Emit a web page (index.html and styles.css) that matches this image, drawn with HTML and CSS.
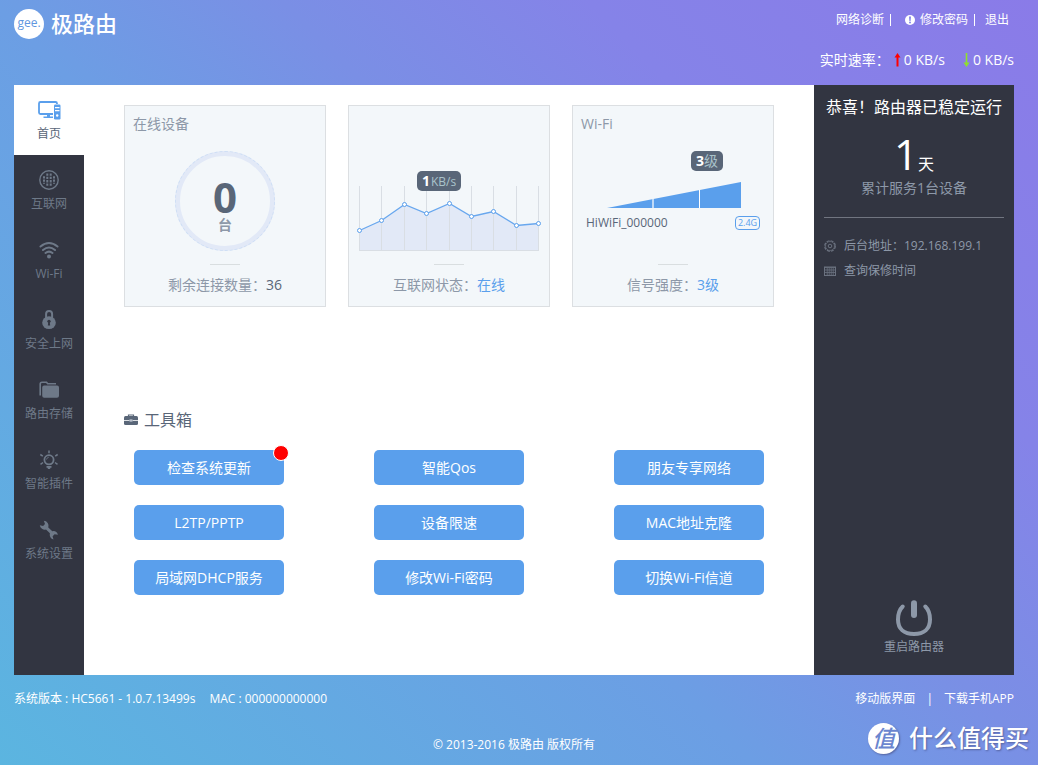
FILE: index.html
```html
<!DOCTYPE html>
<html lang="zh-CN">
<head>
<meta charset="utf-8">
<title>极路由</title>
<meta name="viewport" content="width=device-width, initial-scale=1">
<link rel="stylesheet" href="styles.css">
</head>
<body>
<div class="page">
  <header class="header">
    <a class="logo" href="#">
      <span class="logo-mark">gee.</span>
      <span class="logo-name">极路由</span>
    </a>
    <div class="header-side">
      <div class="header-links">
        <a href="#">网络诊断</a><i class="bar"></i>
        <a class="with-icon" href="#">
          <svg width="10" height="10" viewBox="0 0 10 10"><circle cx="5" cy="5" r="5" fill="#fff"/><path d="M4 1.6h2L5.6 6H4.4z" fill="#8583e8"/><circle cx="5" cy="7.6" r="1" fill="#8583e8"/></svg>
          修改密码</a><i class="bar"></i>
        <a href="#">退出</a>
      </div>
      <div class="rates">
        <span>实时速率：</span>
        <span class="rate"><svg width="7" height="14" viewBox="0 0 7 14"><path d="M3.500 0L6.500 4.500H4.500V13.500H2.500V4.500H.5z" fill="#f00"/></svg>0 KB/s</span>
        <span class="rate"><svg width="7" height="14" viewBox="0 0 7 14"><path d="M3.500 14L6.500 9.500H4.300V0H2.700V9.500H.5z" fill="#8fe02e"/></svg>0 KB/s</span>
      </div>
    </div>
  </header>

  <div class="panel">
    <nav class="nav">
      <a class="nav-item active" href="#">
        <svg width="24" height="20" viewBox="0 0 24 20"><rect x="2" y="2" width="18" height="12" rx="1.500" fill="none" stroke="#5a9fec" stroke-width="1.800"/><path d="M10 14h3v2.500h3.500V18h-10v-1.500H10z" fill="#5a9fec"/><rect x="16" y="4" width="8" height="15.500" rx="1.500" fill="#fff"/><rect x="17" y="4.500" width="6.500" height="15" rx="1.200" fill="#5a9fec"/><path d="M18 7h4.500v1.200H18zM18 10h4.500v1.200H18z" fill="#fff"/><circle cx="20.200" cy="15.500" r="1.200" fill="#fff"/></svg>
        <span>首页</span>
      </a>
      <a class="nav-item" href="#">
        <svg width="20" height="20" viewBox="0 0 20 20"><circle cx="10" cy="10" r="9.200" fill="none" stroke="#6e7988" stroke-width="1.400"/><path d="M5 6.200v7.600M8.300 3.500v13M11.700 3.500v13M15 6.200v7.600" stroke="#6e7988" stroke-width="2" stroke-dasharray="2.300 1"/></svg>
        <span>互联网</span>
      </a>
      <a class="nav-item" href="#">
        <svg width="20" height="20" viewBox="0 0 20 20"><g fill="none" stroke="#6e7988" stroke-width="2" stroke-linecap="round"><path d="M1.500 6.500Q10-.5 18.500 6.500M4 10Q10 5 16 10M6.500 13Q10 10.300 13.500 13"/></g><circle cx="10" cy="16.500" r="2" fill="#6e7988"/></svg>
        <span>Wi-Fi</span>
      </a>
      <a class="nav-item" href="#">
        <svg width="20" height="22" viewBox="0 0 20 22"><path d="M6.800 9V4.500a3.300 3.300 0 0 1 6.600 0V9" fill="none" stroke="#6e7988" stroke-width="2.200"/><ellipse cx="10" cy="14" rx="7.500" ry="7" fill="#6e7988"/><circle cx="10" cy="12.500" r="1.800" fill="#323541"/><path d="M9.200 13h1.600l.5 4H8.700z" fill="#323541"/></svg>
        <span>安全上网</span>
      </a>
      <a class="nav-item" href="#">
        <svg width="20" height="20" viewBox="0 0 20 20"><path d="M1.200 15.500V4q0-1.800 1.800-1.800h4.500l1.200 1.500H17" fill="none" stroke="#6e7988" stroke-width="1.600"/><path d="M3.200 7.500q0-2 2-2H18q2 0 2 2v8.300q0 2-2 2H5.200q-2 0-2-2z" fill="#6e7988"/></svg>
        <span>路由存储</span>
      </a>
      <a class="nav-item" href="#">
        <svg width="20" height="20" viewBox="0 0 20 20"><circle cx="10" cy="9.800" r="4.600" fill="none" stroke="#6e7988" stroke-width="1.800"/><path d="M7.500 9.500Q7.800 7.500 9.800 7.200" fill="none" stroke="#6e7988" stroke-width=".8"/><path d="M7.500 16h5v1.700h-1L11 19H9l-.5-1.300h-1z" fill="#6e7988"/><path d="M10 .5v2.700M1.300 4.500l2.500 1.600M18.700 4.500l-2.500 1.600M1.500 14.300l2.500-1.800M18.500 14.300L16 12.500" stroke="#6e7988" stroke-width="1.500"/></svg>
        <span>智能插件</span>
      </a>
      <a class="nav-item" href="#">
        <svg width="20" height="20" viewBox="0 0 20 20"><path d="M4.800.800A5 5 0 0 1 9.300 7.400l4 3.800a5 5 0 0 1 5.600 3.500l-3.300-.4-2 2 .9 3.200a5 5 0 0 1-3.600-6.200L7 9.500A5 5 0 0 1 .8 5.300l3.300.600 1.900-1.800z" fill="#6e7988"/></svg>
        <span>系统设置</span>
      </a>
    </nav>

    <main class="content">
      <section class="cards">
        <article class="card">
          <h2 class="card-title">在线设备</h2>
          <div class="ring"><strong>0</strong><span>台</span></div>
          <p class="card-status">剩余连接数量：<b>36</b></p>
        </article>
        <article class="card">
          <div class="visual">
            <svg width="200" height="118" viewBox="0 0 200 118">
              <path d="M10.500 96.500L32.500 86.500L55.500 70.500L77.500 79.500L100.500 69.500L122.500 82.500L144.500 77.500L167.500 91.500L189.500 89.500V116.500H10.500z" fill="#e2e9f7"/>
              <path d="M10.500 52V116.500M32.500 52V116.500M55.500 52V116.500M77.500 52V116.500M100.500 52V116.500M122.500 52V116.500M144.500 52V116.500M167.500 52V116.500M189.500 52V116.500M10 116.500H190" stroke="#d9dee4" fill="none"/>
              <path d="M10.500 96.500L32.500 86.500L55.500 70.500L77.500 79.500L100.500 69.500L122.500 82.500L144.500 77.500L167.500 91.500L189.500 89.500" fill="none" stroke="#68a7ee" stroke-width="1.300"/>
              <g fill="#fff" stroke="#5a9fec"><circle cx="10.500" cy="96.500" r="2"/><circle cx="32.500" cy="86.500" r="2"/><circle cx="55.500" cy="70.500" r="2"/><circle cx="77.500" cy="79.500" r="2"/><circle cx="100.500" cy="69.500" r="2"/><circle cx="122.500" cy="82.500" r="2"/><circle cx="144.500" cy="77.500" r="2"/><circle cx="167.500" cy="91.500" r="2"/><circle cx="189.500" cy="89.500" r="2"/></g>
            </svg>
            <div class="tip tip-speed"><b>1</b>KB/s</div>
          </div>
          <p class="card-status">互联网状态：<a href="#">在线</a></p>
        </article>
        <article class="card">
          <h2 class="card-title">Wi-Fi</h2>
          <div class="visual visual-wifi">
            <svg width="200" height="74" viewBox="0 0 200 74"><path d="M34 74L168 48V74z" fill="#5a9fec"/><path d="M80 65V74" stroke="#c0daf7" stroke-width="2"/><path d="M126.500 56V74" stroke="#fff"/></svg>
            <div class="tip tip-level"><b>3</b>级</div>
            <div class="ssid"><span>HiWiFi_000000</span><span class="band">2.4G</span></div>
          </div>
          <p class="card-status">信号强度：<a href="#">3级</a></p>
        </article>
      </section>

      <section class="tools">
        <h2 class="tools-title">
          <svg width="14" height="12" viewBox="0 0 14 12"><path d="M4.500 2.500V1h5v1.500" fill="none" stroke="#596678" stroke-width="1.200"/><rect y="2" width="14" height="9" rx="1.500" fill="#596678"/><path d="M0 6.500h5M9 6.500h5" stroke="#fff" stroke-width=".8"/><ellipse cx="7" cy="6.500" rx="2" ry="1.200" fill="#b8c0cb"/></svg>
          工具箱</h2>
        <div class="tool-grid">
          <button class="tool has-dot" type="button">检查系统更新</button>
          <button class="tool" type="button">智能Qos</button>
          <button class="tool" type="button">朋友专享网络</button>
          <button class="tool" type="button">L2TP/PPTP</button>
          <button class="tool" type="button">设备限速</button>
          <button class="tool" type="button">MAC地址克隆</button>
          <button class="tool" type="button">局域网DHCP服务</button>
          <button class="tool" type="button">修改Wi-Fi密码</button>
          <button class="tool" type="button">切换Wi-Fi信道</button>
        </div>
      </section>
    </main>

    <aside class="aside">
      <h2 class="aside-title">恭喜！路由器已稳定运行</h2>
      <p class="days"><strong>1</strong><span>天</span></p>
      <p class="served">累计服务1台设备</p>
      <ul class="info">
        <li><svg width="12" height="12" viewBox="0 0 12 12"><circle cx="6" cy="6" r="5.300" fill="none" stroke="#6b7280" stroke-width="1.200" stroke-dasharray="3 1.160"/><circle cx="6" cy="6" r="4.500" fill="none" stroke="#6b7280" stroke-width=".7"/><circle cx="6" cy="6" r="1.800" fill="none" stroke="#6b7280"/></svg>后台地址：192.168.199.1</li>
        <li><svg width="12" height="12" viewBox="0 0 12 12"><rect x=".5" y="2" width="11" height="8.500" fill="none" stroke="#6b7280"/><path d="M0 2.500h12M1 5h10M1 7.500h10M3.200 3v7M5.200 3v7M7.200 3v7M9.200 3v7" stroke="#6b7280" stroke-width=".8"/></svg><a href="#">查询保修时间</a></li>
      </ul>
      <button class="restart" type="button">
        <svg width="36" height="37" viewBox="0 0 36 37"><g fill="none" stroke="#8d98a8" stroke-linecap="round"><path d="M6.700 6.500C2 11 2 16 2 19.500C2 29 8 34 18 34S34 29 34 19.500C34 16 34 11 29.300 6.500" stroke-width="4"/><path d="M18 3.200V15" stroke-width="6"/></g></svg>
        重启路由器
      </button>
    </aside>
  </div>

  <footer class="footer">
    <div class="footer-row">
      <div class="version"><span>系统版本 : HC5661 - 1.0.7.13499s</span><span>MAC : 000000000000</span></div>
      <div class="apps"><a href="#">移动版界面</a><span>|</span><a href="#">下载手机APP</a></div>
    </div>
    <p class="copyright">© 2013-2016 极路由 版权所有</p>
  </footer>
</div>
<div class="watermark"><span class="watermark-mark"><i>值</i></span>什么值得买</div>
</body>
</html>
```
FILE: styles.css
```css
* { box-sizing: border-box; }

html { min-height: 100%; }

body {
  margin: 0;
  min-height: 100vh;
  position: relative;
  background: linear-gradient(45deg, #5bb5e0 0%, #6c9ee4 42%, #7a8fe5 58%, #8583e8 75%, #8a7be8 100%);
  color: #fff;
  font: 12px/20px "Open Sans", "Noto Sans CJK SC", sans-serif;
}

h2, p, ul { margin: 0; padding: 0; font-weight: 400; }
ul { list-style: none; }
a { color: inherit; text-decoration: none; }
button { font: inherit; color: inherit; border: 0; padding: 0; background: none; cursor: pointer; }
svg { display: block; flex: none; }

.page { padding: 0 24px 0 14px; }

.header { display: flex; justify-content: space-between; height: 85px; }
.logo { display: flex; align-items: center; gap: 7px; height: 48px; }
.logo-mark {
  width: 30px; height: 30px; border-radius: 50%;
  background: #fff; color: #5f97e0;
  font: 12px/28px "Open Sans", sans-serif; text-align: center;
}
.logo-name { font-size: 22px; font-weight: 500; line-height: 26px; padding-bottom: 2px; }

.header-side { padding-top: 10px; }
.header-links { display: flex; justify-content: flex-end; align-items: center; padding-right: 5px; }
.with-icon { display: flex; align-items: center; gap: 5px; }
.bar { width: 1px; height: 12px; background: #fff; margin: 0 10px 0 6px; }
.header-links .bar:first-of-type { margin-right: 14px; }
.rates { display: flex; justify-content: flex-end; margin-top: 20px; font-size: 14px; }
.rate { display: flex; align-items: center; gap: 3px; }
.rates span:first-child { margin-right: 4px; }
.rate + .rate { margin-left: 18px; }

.panel { display: flex; min-height: 590px; background: #fff; }

.nav { flex: 0 0 70px; background: #323541; color: #6e7988; }
.nav-item {
  display: flex; flex-direction: column; align-items: center; justify-content: center;
  height: 70px; gap: 4px; padding-top: 3px;
}
.nav-item svg { height: 20px; }
.nav-item.active { background: #fff; color: #596678; }

.content { flex: 1; padding: 20px 40px; }
.cards { display: grid; grid-template-columns: repeat(3, 1fr); gap: 22px; }
.card {
  display: flex; flex-direction: column;
  min-height: 202px; padding-top: 8px;
  background: #f3f7fa; border: 1px solid #dcdfe2; color: #8d98a8;
}
.card-title { padding: 0 8px; font-size: 14px; line-height: 20px; }
.ring {
  display: flex; flex-direction: column; align-items: center; justify-content: center;
  width: 100px; height: 100px; margin: auto auto 0; padding-top: 10px;
  border-radius: 50%; background: #f3f7fa;
  border: 5px solid #e2e9f7; outline: 1px dashed #cfdff5; outline-offset: -1px;
}
.ring strong { font-size: 42px; line-height: 38px; color: #596678; }
.ring span { font-size: 14px; font-weight: 700; line-height: 18px; }
.visual { position: relative; width: 200px; height: 117px; margin: auto auto 0; }
.tip {
  position: absolute; height: 20px; border-radius: 5px;
  background: #596678; color: #a9c3cb; line-height: 20px; text-align: center;
}
.tip b { color: #fff; font-size: 14px; }
.tip-speed { left: 68px; top: 37px; width: 44px; }
.tip-speed b { margin-right: 1px; }
.tip-level { left: 118px; top: 17px; width: 32px; font-size: 14px; }
.ssid { display: flex; justify-content: space-between; align-items: center; padding: 5px 13px 0; color: #596678; }
.band {
  width: 25px; height: 14px; border: 1px solid #5a9fec; border-radius: 4px;
  color: #5a9fec; font-size: 9px; line-height: 12px; text-align: center;
}
.card-status { padding: 11px 0; font-size: 14px; line-height: 20px; text-align: center; }
.card-status::before { content: ""; display: block; width: 30px; height: 1px; margin: 2px auto 10px; background: #d9dee0; }
.card-status b { font-weight: 400; color: #596678; }
.card-status a { color: #5a9fec; }

.tools { margin-top: 101px; }
.tools-title { display: flex; align-items: center; gap: 6px; color: #596678; font-size: 16px; line-height: 24px; }
.tool-grid { display: grid; grid-template-columns: repeat(3, 150px); justify-content: space-between; gap: 20px 0; padding: 18px 10px 0; }
.tool { position: relative; height: 35px; border-radius: 5px; background: #5a9fec; font-size: 14px; }
.has-dot::after {
  content: ""; position: absolute; right: -5px; top: -5px;
  width: 14px; height: 14px; border: 1px solid #fff; border-radius: 50%; background: #f00;
}

.aside {
  display: flex; flex-direction: column; flex: 0 0 200px;
  padding: 10px 10px 18px; background: #323541; color: #8d98a8; text-align: center;
}
.aside-title { color: #fff; font-size: 16px; line-height: 24px; white-space: nowrap; }
.days { display: flex; justify-content: center; align-items: baseline; height: 48px; margin-top: 11px; color: #fff; font-size: 16px; line-height: 24px; }
.days strong { font-size: 42px; font-weight: 500; line-height: 48px; }
.served { font-size: 14px; line-height: 20px; padding-bottom: 19px; border-bottom: 1px solid #717580; }
.info { padding-top: 15px; text-align: left; }
.info li { display: flex; align-items: center; gap: 8px; height: 25px; }
.restart { display: flex; flex-direction: column; align-items: center; margin: auto auto 0; }

.footer-row { display: flex; justify-content: space-between; padding-top: 14px; }
.version { display: flex; gap: 14px; }
.apps { display: flex; gap: 11px; }
.copyright { margin-top: 26px; text-align: center; }

.watermark {
  position: absolute; right: 9px; bottom: 10px;
  display: flex; align-items: center; gap: 10px;
  font-size: 24px; font-weight: 500; line-height: 34px;
  text-shadow: 1px 1px 2px #55639f;
}
.watermark-mark {
  width: 31px; height: 31px; border-radius: 50%;
  background: #fff; color: #6b86cf; text-align: center;
  font-size: 23px; line-height: 30px; text-shadow: none; box-shadow: 1px 1px 2px #55639f;
}
```
